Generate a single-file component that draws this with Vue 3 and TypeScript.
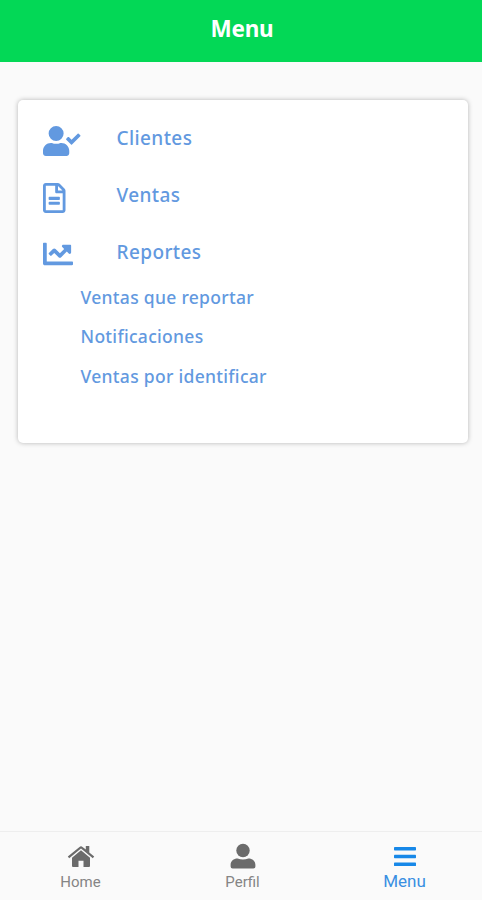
<script setup lang="ts">
interface Entry {
  label: string
  width: number
  viewBox: string
  path: string
}

const entries: Entry[] = [
  {
    label: 'Clientes',
    width: 37.5,
    viewBox: '0 0 640 512',
    path: 'M224 256A128 128 0 1 0 224 0a128 128 0 1 0 0 256zm89.600 32h-16.700c-22.200 10.200-46.900 16-72.900 16s-50.600-5.800-72.900-16h-16.700C60.200 288 0 348.200 0 422.400V464c0 26.500 21.500 48 48 48h352c26.500 0 48-21.500 48-48v-41.600c0-74.200-60.200-134.400-134.400-134.400zM636.600 159.600l-27.800-28.200c-4.600-4.700-12.100-4.700-16.800-.1L487.200 235.300l-45.500-45.800c-4.600-4.700-12.100-4.700-16.800-.1l-28.100 27.900c-4.700 4.600-4.700 12.100-.1 16.800l81.700 82.300c4.600 4.700 12.100 4.700 16.800.1l141.300-140.100c4.600-4.700 4.700-12.200.1-16.800z',
  },
  {
    label: 'Ventas',
    width: 22.5,
    viewBox: '0 0 384 512',
    path: 'M288 248v28c0 6.600-5.400 12-12 12H108c-6.600 0-12-5.400-12-12v-28c0-6.600 5.400-12 12-12h168c6.600 0 12 5.400 12 12zm-12 72H108c-6.600 0-12 5.400-12 12v28c0 6.600 5.400 12 12 12h168c6.600 0 12-5.400 12-12v-28c0-6.600-5.400-12-12-12zm108-188.100V464c0 26.500-21.500 48-48 48H48c-26.500 0-48-21.500-48-48V48C0 21.500 21.500 0 48 0h204.100C264.800 0 277 5.100 286 14.100L369.900 98c9 8.900 14.100 21.200 14.100 33.900zm-128-80V128h76.100L256 51.900zM336 464V176H232c-13.300 0-24-10.700-24-24V48H48v416h288z',
  },
  {
    label: 'Reportes',
    width: 30,
    viewBox: '0 0 512 512',
    path: 'M496 384H64V80c0-8.840-7.160-16-16-16H16C7.160 64 0 71.160 0 80v336c0 17.670 14.330 32 32 32h464c8.840 0 16-7.160 16-16v-32c0-8.840-7.160-16-16-16zM464 96H345.940c-21.380 0-32.090 25.850-16.970 40.970l32.400 32.400L288 242.750l-73.370-73.370c-12.500-12.500-32.760-12.500-45.250 0l-68.690 68.690c-6.250 6.250-6.250 16.380 0 22.630l22.620 22.620c6.250 6.250 16.380 6.250 22.630 0L192 237.250l73.370 73.370c12.500 12.500 32.760 12.500 45.250 0l96-96 32.400 32.400c15.120 15.120 40.970 4.410 40.970-16.970V112c.010-8.840-7.150-16-15.990-16z',
  },
]

const reports: string[] = ['Ventas que reportar', 'Notificaciones', 'Ventas por identificar']
</script>

<template>
  <div class="screen">
    <header class="header"><h1>Menu</h1></header>
    <main class="content">
      <section class="card">
        <a v-for="e in entries" :key="e.label" class="entry">
          <span class="entry-icon">
            <svg :width="e.width" height="30" :viewBox="e.viewBox"><path :d="e.path" /></svg>
          </span>
          <span class="entry-label">{{ e.label }}</span>
        </a>
        <div class="reports">
          <a v-for="r in reports" :key="r" class="report">{{ r }}</a>
        </div>
      </section>
    </main>
    <nav class="tabs">
      <a class="tab">
        <svg width="28" height="24" viewBox="0 0 28 24">
          <path d="M14 5.800 5 13.200V21.500q0 1 1 1h5.500v-6.300h5v6.300H22q1 0 1-1v-8.300z" />
          <path d="M18.800 1.600h3.500v6.500l4.900 4-1.400 1.700L14 4.100 2.200 13.800.8 12.100 12.500 2.400q1.500-1.200 3 0l3.300 2.700z" />
        </svg>
        <span>Home</span>
      </a>
      <a class="tab">
        <svg width="26" height="26" viewBox="0 0 26 26">
          <circle cx="13" cy="7" r="6.700" />
          <path d="M.6 23v-1.500c0-4 3-6.500 7-6.500 3.500 1.400 7.300 1.400 10.800 0 4 0 7 2.500 7 6.500V23q0 2-2 2H2.600q-2 0-2-2z" />
        </svg>
        <span>Perfil</span>
      </a>
      <a class="tab active">
        <svg width="22" height="22" viewBox="0 0 22 22">
          <rect y="1.500" width="22" height="3.500" rx=".7" />
          <rect y="9.300" width="22" height="3.500" rx=".7" />
          <rect y="17.100" width="22" height="3.500" rx=".7" />
        </svg>
        <span>Menu</span>
      </a>
    </nav>
  </div>
</template>

<style>
body {
  margin: 0;
}
</style>

<style scoped>
.screen {
  height: 100vh;
  display: flex;
  flex-direction: column;
  background: #fafafa;
  font-family: 'Noto Sans', 'Open Sans', sans-serif;
}
.header {
  height: 62px;
  box-sizing: border-box;
  padding-top: 14px;
  background: #03d856;
  text-align: center;
}
h1 {
  margin: 0;
  padding-left: 2px;
  color: #fff;
  font-size: 22.5px;
  font-weight: 700;
  line-height: 30px;
  letter-spacing: -0.2px;
}
.content {
  flex: 1;
  padding: 38px 14px 0 18px;
}
.card {
  height: 343px;
  box-sizing: border-box;
  padding: 12px 25px;
  background: #fff;
  border-radius: 5px;
  box-shadow: 0 0 5px rgba(0, 0, 0, 0.28);
}
.entry {
  height: 56.8px;
  display: flex;
  align-items: center;
  color: #6299e0;
}
.entry-icon {
  width: 73.5px;
  display: flex;
}
svg {
  display: block;
  fill: currentColor;
}
.entry-icon svg {
  margin-top: 1px;
}
.entry-label {
  margin-top: -4px;
  font-size: 19px;
  font-weight: 550;
  letter-spacing: 0.4px;
}
.reports {
  padding: 0.6px 0 0 37.5px;
  display: flex;
  flex-direction: column;
}
.report {
  height: 39.5px;
  line-height: 28px;
  color: #6299e0;
  font-size: 17.5px;
  font-weight: 550;
  letter-spacing: 0.3px;
}
.tabs {
  height: 69px;
  box-sizing: border-box;
  padding: 0 55px 0 58px;
  display: flex;
  justify-content: space-between;
  border-top: 1px solid #eee;
  background: #fafafa;
}
.tab {
  width: 45px;
  padding-top: 11px;
  display: flex;
  flex-direction: column;
  align-items: center;
  color: #6b6b6b;
  font-family: Roboto, sans-serif;
  font-size: 15px;
}
.tab svg {
  height: 27px;
}
.tab span {
  line-height: 24px;
  color: #858585;
}
.tab.active {
  color: #1788e8;
  font-size: 17px;
}
.tab.active span {
  margin-top: -1px;
  color: #398fe2;
}
</style>
